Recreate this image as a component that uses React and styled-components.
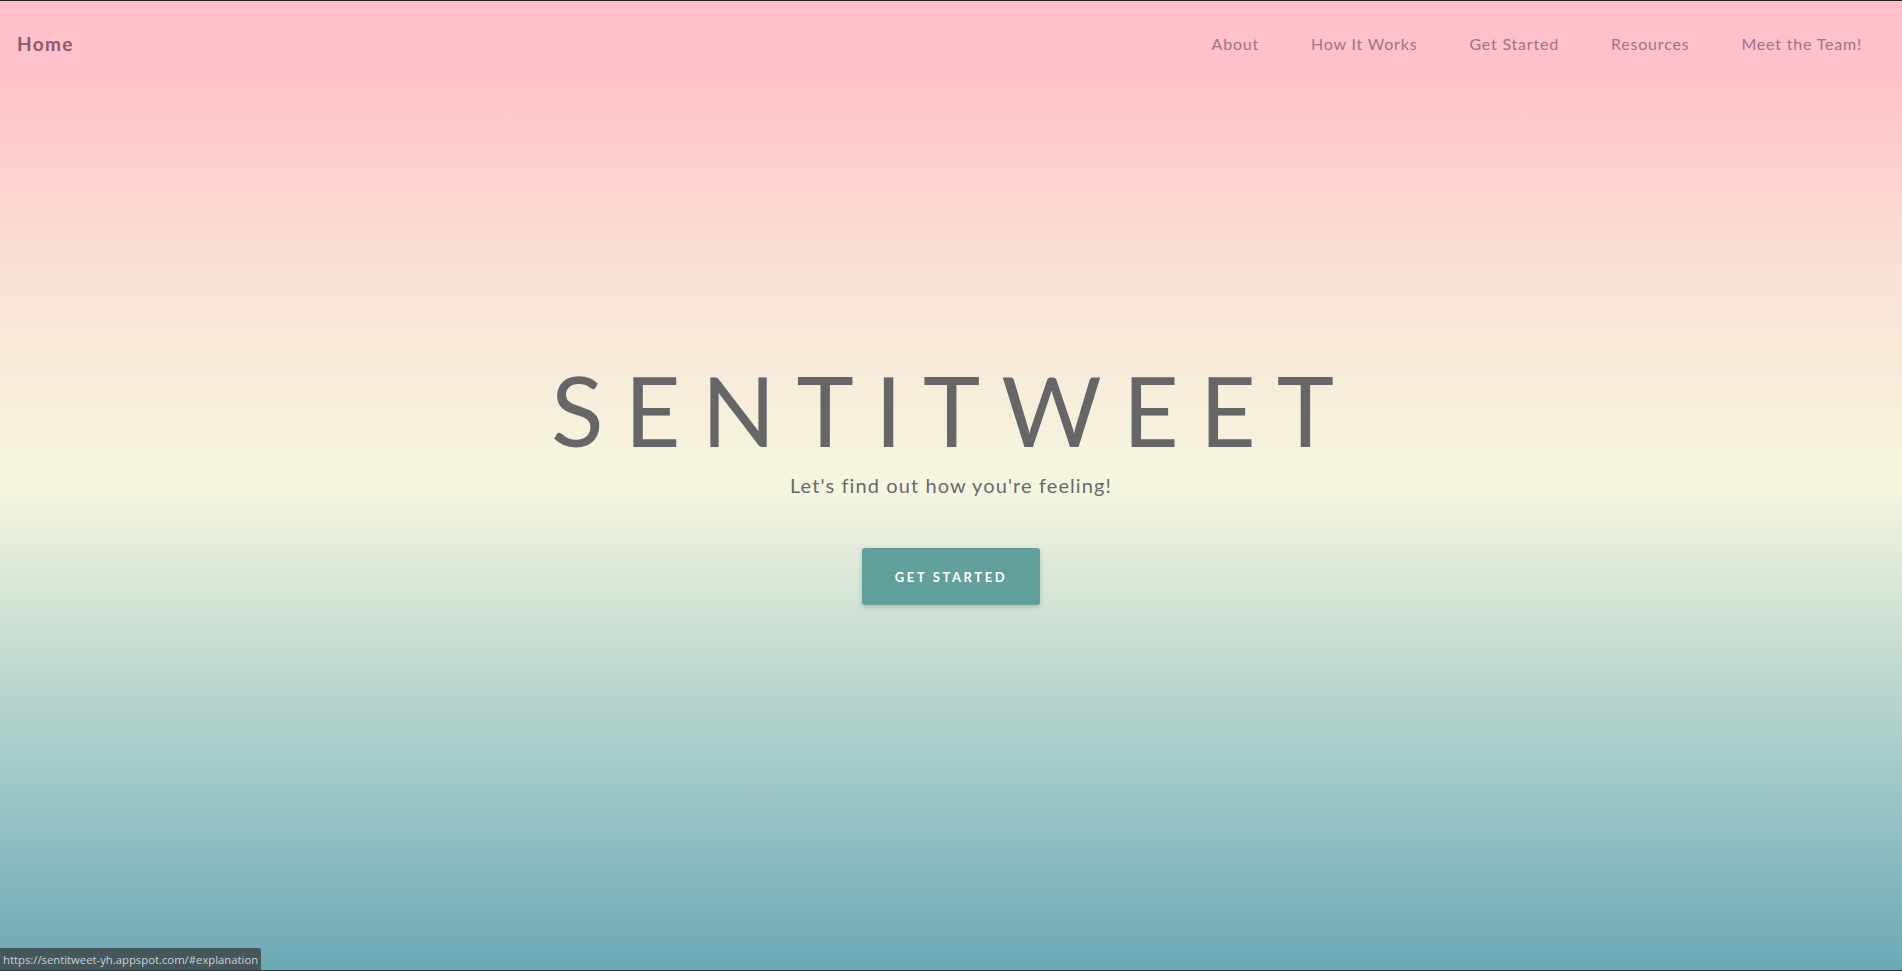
import React from "react";
import styled, { createGlobalStyle } from "styled-components";

const Global = createGlobalStyle`
  html, body { margin: 0; padding: 0; }
  body { font-family: "Lato", "Open Sans", sans-serif; }
  * { box-sizing: border-box; }
`;

const Page = styled.div`
  position: relative;
  height: 971px;
  display: flex;
  flex-direction: column;
  border-top: 1px solid #2b1b20;
  border-bottom: 1px solid #2b3a3e;
  background: linear-gradient(
    to bottom,
    #ffc0cb 0%,
    #ffc2cb 8%,
    #f8e4d6 30%,
    #f5f6e0 50%,
    #d4e3d6 62%,
    #a7cbc8 78%,
    #6ba9b6 100%
  );
  overflow: hidden;
`;

const Nav = styled.nav`
  display: flex;
  align-items: center;
  justify-content: space-between;
  height: 84px;
  padding: 0 40px 0 17px;
`;

const Brand = styled.a`
  font-size: 19px;
  font-weight: 700;
  letter-spacing: 1.4px;
  color: #8c5b68;
  text-decoration: none;
`;

const Links = styled.ul`
  display: flex;
  gap: 52px;
  list-style: none;
  margin: 0;
  padding: 0;
`;

const LinkItem = styled.li`
  font-size: 16px;
  letter-spacing: 0.8px;
  color: #a2747f;
`;

const Hero = styled.main`
  flex: 1;
  display: flex;
  flex-direction: column;
  align-items: center;
  justify-content: center;
  padding-bottom: 89px;
`;

const Title = styled.h1`
  margin: 0;
  font-size: 97px;
  font-weight: 400;
  letter-spacing: 21px;
  margin-right: -4px;
  color: #666666;
  line-height: 1;
`;

const Subtitle = styled.p`
  margin: 15px 0 0;
  font-size: 20px;
  letter-spacing: 1.1px;
  color: #6a6a6a;
`;

const Button = styled.a`
  margin-top: 51px;
  width: 178px;
  height: 57px;
  display: flex;
  align-items: center;
  justify-content: center;
  background: #62a09b;
  color: #ffffff;
  font-size: 13px;
  font-weight: 700;
  letter-spacing: 2.6px;
  border-radius: 3px;
  box-shadow: 0 2px 5px rgba(0, 0, 0, 0.18);
  text-decoration: none;
`;

const Status = styled.div`
  position: absolute;
  left: 0;
  bottom: 0;
  height: 22px;
  padding: 0 3px;
  display: flex;
  align-items: center;
  background: #46575b;
  color: #c9d2d4;
  font-family: "Open Sans", "DejaVu Sans", sans-serif;
  font-size: 11.3px;
  border-top-right-radius: 3px;
`;

export default function App() {
  const links = ["About", "How It Works", "Get Started", "Resources", "Meet the Team!"];
  return (
    <>
      <Global />
      <Page>
        <Nav>
          <Brand href="#">Home</Brand>
          <Links>
            {links.map((l) => (
              <LinkItem key={l}>{l}</LinkItem>
            ))}
          </Links>
        </Nav>
        <Hero>
          <Title>SENTITWEET</Title>
          <Subtitle>Let's find out how you're feeling!</Subtitle>
          <Button href="#explanation">GET STARTED</Button>
        </Hero>
        <Status>https://sentitweet-yh.appspot.com/#explanation</Status>
      </Page>
    </>
  );
}
